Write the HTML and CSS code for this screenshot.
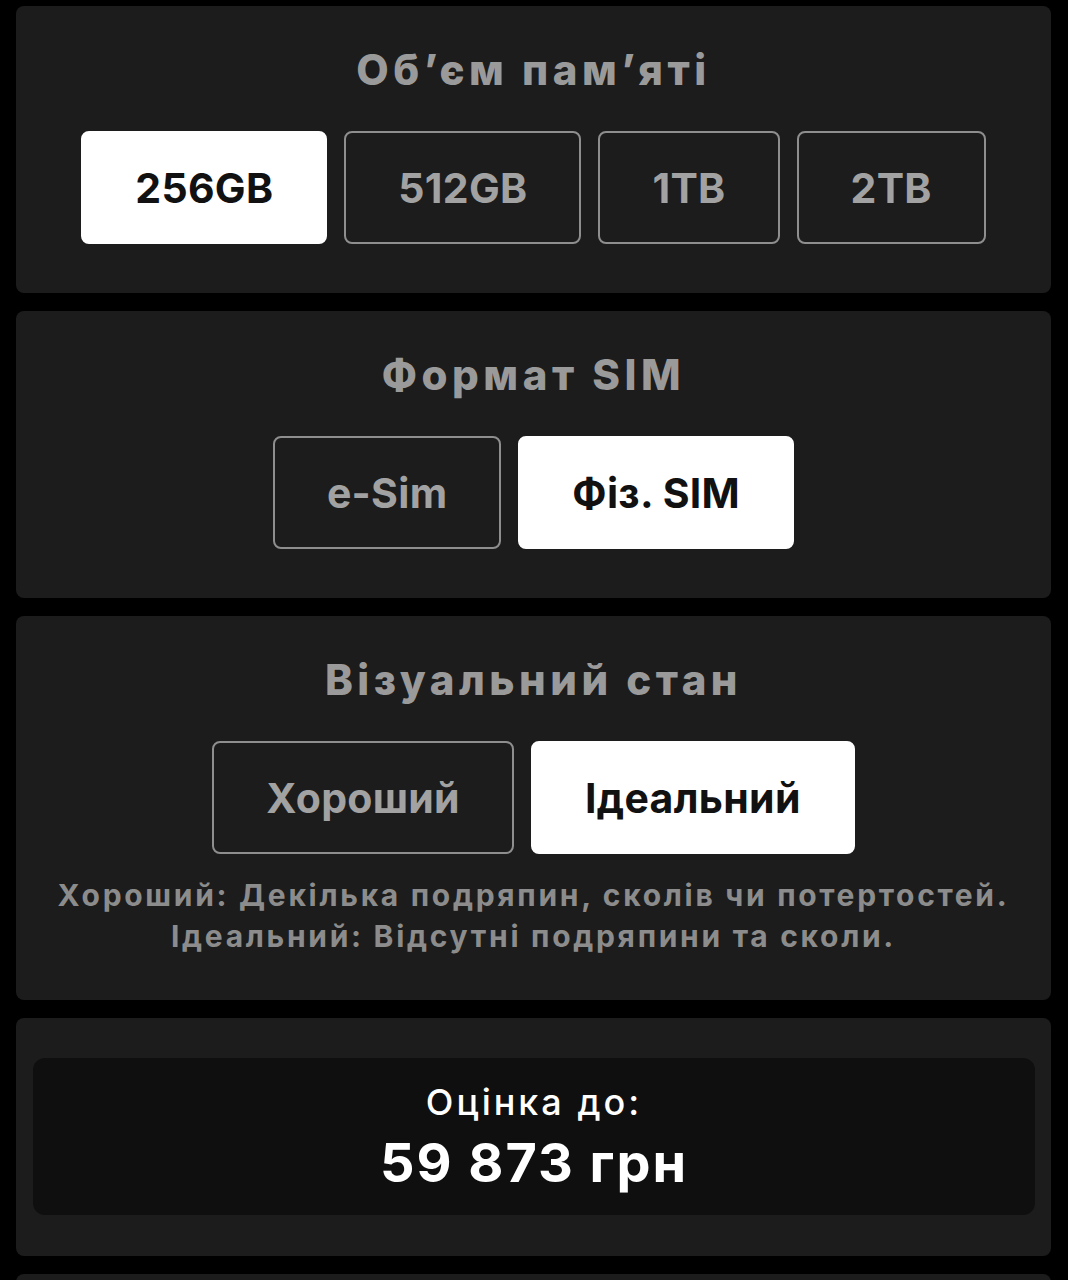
FILE: index.html
```html
<!DOCTYPE html>
<html lang="uk">
<head>
<meta charset="utf-8">
<title>Оцінка</title>
<link rel="stylesheet" href="styles.css">
</head>
<body>
<main class="page">
  <section class="card">
    <h2 class="card-title">Об’єм пам’яті</h2>
    <div class="options">
      <button class="opt opt-active">256GB</button>
      <button class="opt">512GB</button>
      <button class="opt">1TB</button>
      <button class="opt">2TB</button>
    </div>
  </section>
  <section class="card">
    <h2 class="card-title">Формат SIM</h2>
    <div class="options">
      <button class="opt">e-Sim</button>
      <button class="opt opt-active">Фіз. SIM</button>
    </div>
  </section>
  <section class="card card-desc">
    <h2 class="card-title">Візуальний стан</h2>
    <div class="options">
      <button class="opt">Хороший</button>
      <button class="opt opt-active">Ідеальний</button>
    </div>
    <p class="desc">Хороший: Декілька подряпин, сколів чи потертостей.<br>Ідеальний: Відсутні подряпини та сколи.</p>
  </section>
  <section class="card card-price">
    <div class="price-box">
      <div class="price-label">Оцінка до:</div>
      <div class="price-value">59 873 грн</div>
    </div>
  </section>
  <section class="card card-next"></section>
</main>
</body>
</html>
```
FILE: styles.css
```css
html, body {
  margin: 0;
  padding: 0;
  background: #000;
}
body {
  font-family: Inter, "Noto Sans", sans-serif;
}
.page {
  display: flex;
  flex-direction: column;
  gap: 18px;
  padding: 6px 17px 0 16px;
}
.card {
  background: #1c1c1c;
  border-radius: 8px;
  padding: 39px 20px 49px;
  text-align: center;
}
.card-title {
  margin: 0 0 36px;
  font-size: 42px;
  line-height: 50px;
  font-weight: 800;
  letter-spacing: 4.5px;
  color: #9a9a9a;
}
.options {
  display: flex;
  justify-content: center;
  gap: 17px;
}
.opt {
  height: 113px;
  padding: 0 52px;
  border: 2px solid #8e8e8e;
  border-radius: 8px;
  background: #1c1c1c;
  color: #a2a2a2;
  font-family: inherit;
  font-size: 41px;
  font-weight: 700;
  letter-spacing: 0.3px;
}
.opt-active {
  background: #fff;
  border-color: #fff;
  color: #111;
}
.card-desc {
  padding-bottom: 43px;
}
.desc {
  margin: 21px 0 0;
  font-size: 30px;
  line-height: 41px;
  font-weight: 700;
  letter-spacing: 2.7px;
  color: #8c8c8c;
}
.card-price {
  padding: 40px 16px 41px 17px;
}
.price-box {
  background: #0f0f0f;
  border-radius: 12px;
  padding: 24px 0 22px;
}
.price-label {
  font-size: 36px;
  line-height: 40px;
  font-weight: 500;
  letter-spacing: 3px;
  color: #fff;
}
.price-value {
  margin-top: 11px;
  font-size: 54px;
  line-height: 60px;
  font-weight: 700;
  letter-spacing: 2px;
  color: #fff;
}
.card-next {
  height: 60px;
  padding: 0;
}
```
